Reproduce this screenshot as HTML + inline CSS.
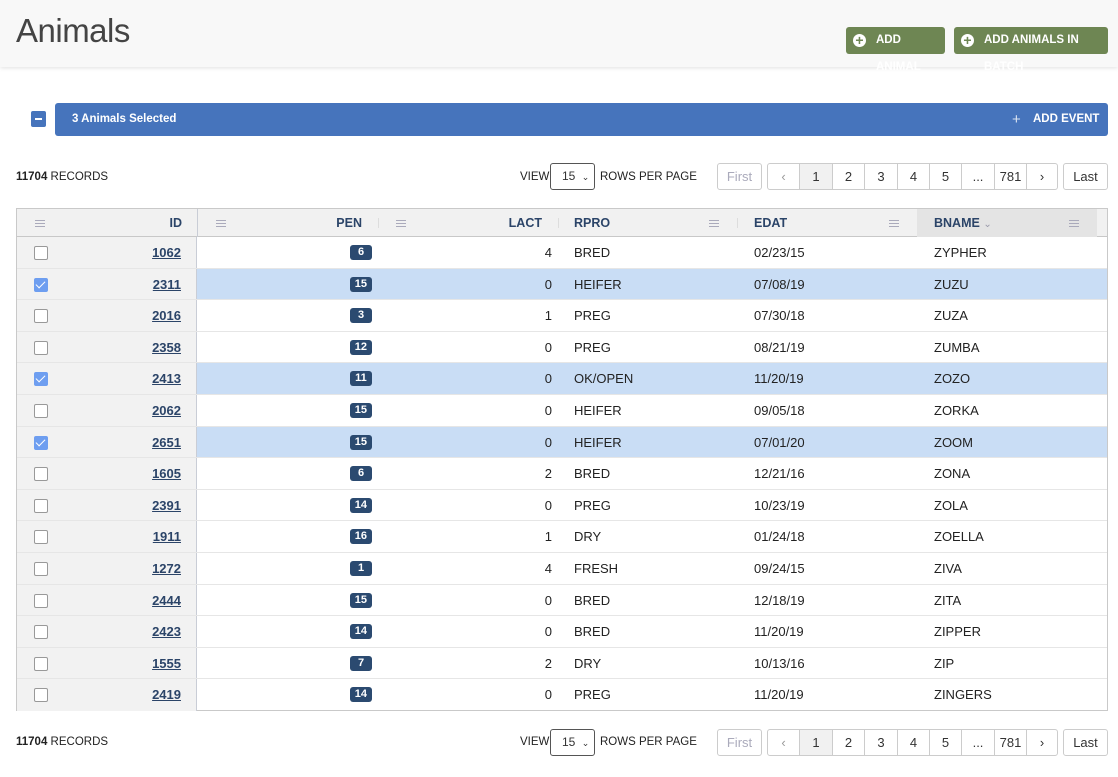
<!DOCTYPE html>
<html><head><meta charset="utf-8"><style>
*{box-sizing:border-box;margin:0;padding:0}
body{width:1118px;height:777px;background:#fff;font-family:"Liberation Sans Narrow","Liberation Sans",sans-serif;color:#222;position:relative;overflow:hidden;font-size:13px}
.abs{position:absolute}
.hdr{left:0;top:0;width:1118px;height:67px;background:#f8f8f8;box-shadow:0 1px 4px rgba(0,0,0,.12)}
h1{position:absolute;left:16px;top:12px;font-size:33px;font-weight:normal;color:#444;font-family:"Liberation Sans",sans-serif;letter-spacing:-0.5px}
.gbtn{position:absolute;top:27px;height:27px;background:#6e8653;border-radius:3px;color:#fff;font-weight:bold;font-size:11.5px;line-height:27px;padding-left:30px}
.gbtn:before{content:"+";position:absolute;left:7px;top:7px;width:13px;height:13px;border-radius:50%;background:#fff;color:#6e8653;font-size:14px;line-height:13px;text-align:center}
.bar{left:55px;top:103px;width:1053px;height:33px;background:#4674bc;border-radius:3px;color:#fff;font-weight:bold;font-size:11.5px;line-height:33px}
.minus{left:31px;top:111px;width:15px;height:16px;background:#4674bc;border-radius:2px}
.minus:after{content:"";position:absolute;left:4px;top:7px;width:7px;height:1.5px;background:#fff}
.rec{font-size:11.5px}
.pg{position:absolute;height:27px;border:1px solid #ccc;border-radius:3px;background:#fff;font-size:13px;line-height:25px;text-align:center;color:#333}
.cell{position:absolute;top:0;height:25px;line-height:25px;border-left:1px solid #ccc;text-align:center}
.tbl{left:16px;top:208px;width:1092px;height:503px;border:1px solid #c9c9c9}
.th{position:absolute;left:0;top:0;width:1090px;height:28px;background:#f1f1f1;border-bottom:1px solid #c8c8c8;font-weight:bold;color:#2b4468;font-size:12.5px;line-height:28px}
.ham{position:absolute;top:11px;width:10px;height:7px;border-top:1px solid #aab;border-bottom:1px solid #aab}
.ham:after{content:"";position:absolute;left:0;top:2px;width:10px;border-top:1px solid #aab}
.sep{position:absolute;top:9px;width:1px;height:10px;background:#ddd}
.row{position:absolute;left:0;width:1090px;height:31.6px;border-bottom:1px solid #e6e6e6;font-size:13px;line-height:31px}
.row.sel{background:#c9ddf5}
.c0{position:absolute;left:0;top:0;width:180px;height:100%;background:#f2f2f2;border-right:1px solid #c9cdd6}
.cb{position:absolute;left:17px;top:9px;width:14px;height:14px;border:1.5px solid #999;border-radius:2px;background:#fff}
.sel .cb{background:#6e9ef0;border-color:#6e9ef0}
.sel .cb:after{content:"";position:absolute;left:3px;top:0px;width:4px;height:8px;border:solid #fff;border-width:0 1.5px 1.5px 0;transform:rotate(45deg)}
.id{position:absolute;right:15px;top:0;font-weight:bold;text-decoration:underline;color:#2b4468}
.badge{position:absolute;right:735px;top:8px;height:15px;min-width:22px;padding:0 5px;background:#2b4a70;color:#fff;border-radius:3px;font-size:11px;font-weight:bold;line-height:15px;text-align:center}
.lact{position:absolute;right:555px;top:0}
.rp{position:absolute;left:557px;top:0}
.ed{position:absolute;left:737px;top:0}
.bn{position:absolute;left:917px;top:0}
</style></head><body>
<div class="abs hdr"></div>
<h1>Animals</h1>
<div class="gbtn" style="left:846px;width:99px">ADD ANIMAL</div>
<div class="gbtn" style="left:954px;width:154px">ADD ANIMALS IN BATCH</div>
<div class="abs minus"></div>
<div class="abs bar"><span style="position:absolute;left:17px">3 Animals Selected</span><span style="position:absolute;left:957px;font-weight:normal;font-size:15px;opacity:.8">+</span><span style="position:absolute;left:978px">ADD EVENT</span></div>

<div class="abs rec" style="left:16px;top:171px"><b>11704</b> RECORDS</div>
<div class="abs rec" style="left:520px;top:171px">VIEW</div>
<div class="pg" style="left:550px;top:163px;width:45px;border-color:#555;font-size:12px;text-align:left;padding-left:11px">15 <span style="font-size:9px;margin-left:3px">&#8964;</span></div>
<div class="abs rec" style="left:600px;top:171px">ROWS PER PAGE</div>
<div class="pg" style="left:717px;top:163px;width:45px;color:#aab">First</div>
<div class="pg" style="left:767px;top:163px;width:291px">
<div class="cell" style="left:0;width:31px;border:0;color:#999">&#8249;</div>
<div class="cell" style="left:31px;width:33px;background:#f1f1f1">1</div>
<div class="cell" style="left:64px;width:32px">2</div>
<div class="cell" style="left:96px;width:33px">3</div>
<div class="cell" style="left:129px;width:32px">4</div>
<div class="cell" style="left:161px;width:32px">5</div>
<div class="cell" style="left:193px;width:33px">...</div>
<div class="cell" style="left:226px;width:32px">781</div>
<div class="cell" style="left:258px;width:31px">&#8250;</div>
</div>
<div class="pg" style="left:1063px;top:163px;width:45px">Last</div>

<div class="abs tbl">
<div class="th">
<div class="ham" style="left:18px"></div><span style="position:absolute;right:925px">ID</span>
<div style="position:absolute;left:180px;top:0;width:1px;height:28px;background:#c9cdd6"></div>
<div class="ham" style="left:199px"></div><span style="position:absolute;right:745px">PEN</span><div class="sep" style="left:361px"></div>
<div class="ham" style="left:379px"></div><span style="position:absolute;right:565px">LACT</span><div class="sep" style="left:541px"></div>
<span style="position:absolute;left:557px">RPRO</span><div class="ham" style="left:692px"></div><div class="sep" style="left:720px"></div>
<span style="position:absolute;left:737px">EDAT</span><div class="ham" style="left:872px"></div><div class="sep" style="left:900px"></div>
<div style="position:absolute;left:900px;top:0;width:180px;height:28px;background:#e4e4e4"></div>
<span style="position:absolute;left:917px">BNAME <span style="color:#99a;font-weight:normal;font-size:10px">&#8964;</span></span><div class="ham" style="left:1052px"></div>
</div>
<div id="rows"></div>
<div class="row" style="top:28px"><div class="c0"><div class="cb"></div><span class="id">1062</span></div><span class="badge">6</span><span class="lact">4</span><span class="rp">BRED</span><span class="ed">02/23/15</span><span class="bn">ZYPHER</span></div>
<div class="row sel" style="top:59.6px"><div class="c0"><div class="cb"></div><span class="id">2311</span></div><span class="badge">15</span><span class="lact">0</span><span class="rp">HEIFER</span><span class="ed">07/08/19</span><span class="bn">ZUZU</span></div>
<div class="row" style="top:91.2px"><div class="c0"><div class="cb"></div><span class="id">2016</span></div><span class="badge">3</span><span class="lact">1</span><span class="rp">PREG</span><span class="ed">07/30/18</span><span class="bn">ZUZA</span></div>
<div class="row" style="top:122.8px"><div class="c0"><div class="cb"></div><span class="id">2358</span></div><span class="badge">12</span><span class="lact">0</span><span class="rp">PREG</span><span class="ed">08/21/19</span><span class="bn">ZUMBA</span></div>
<div class="row sel" style="top:154.4px"><div class="c0"><div class="cb"></div><span class="id">2413</span></div><span class="badge">11</span><span class="lact">0</span><span class="rp">OK/OPEN</span><span class="ed">11/20/19</span><span class="bn">ZOZO</span></div>
<div class="row" style="top:186px"><div class="c0"><div class="cb"></div><span class="id">2062</span></div><span class="badge">15</span><span class="lact">0</span><span class="rp">HEIFER</span><span class="ed">09/05/18</span><span class="bn">ZORKA</span></div>
<div class="row sel" style="top:217.6px"><div class="c0"><div class="cb"></div><span class="id">2651</span></div><span class="badge">15</span><span class="lact">0</span><span class="rp">HEIFER</span><span class="ed">07/01/20</span><span class="bn">ZOOM</span></div>
<div class="row" style="top:249.2px"><div class="c0"><div class="cb"></div><span class="id">1605</span></div><span class="badge">6</span><span class="lact">2</span><span class="rp">BRED</span><span class="ed">12/21/16</span><span class="bn">ZONA</span></div>
<div class="row" style="top:280.8px"><div class="c0"><div class="cb"></div><span class="id">2391</span></div><span class="badge">14</span><span class="lact">0</span><span class="rp">PREG</span><span class="ed">10/23/19</span><span class="bn">ZOLA</span></div>
<div class="row" style="top:312.4px"><div class="c0"><div class="cb"></div><span class="id">1911</span></div><span class="badge">16</span><span class="lact">1</span><span class="rp">DRY</span><span class="ed">01/24/18</span><span class="bn">ZOELLA</span></div>
<div class="row" style="top:344px"><div class="c0"><div class="cb"></div><span class="id">1272</span></div><span class="badge">1</span><span class="lact">4</span><span class="rp">FRESH</span><span class="ed">09/24/15</span><span class="bn">ZIVA</span></div>
<div class="row" style="top:375.6px"><div class="c0"><div class="cb"></div><span class="id">2444</span></div><span class="badge">15</span><span class="lact">0</span><span class="rp">BRED</span><span class="ed">12/18/19</span><span class="bn">ZITA</span></div>
<div class="row" style="top:407.2px"><div class="c0"><div class="cb"></div><span class="id">2423</span></div><span class="badge">14</span><span class="lact">0</span><span class="rp">BRED</span><span class="ed">11/20/19</span><span class="bn">ZIPPER</span></div>
<div class="row" style="top:438.8px"><div class="c0"><div class="cb"></div><span class="id">1555</span></div><span class="badge">7</span><span class="lact">2</span><span class="rp">DRY</span><span class="ed">10/13/16</span><span class="bn">ZIP</span></div>
<div class="row" style="top:470.4px;border-bottom:0"><div class="c0"><div class="cb"></div><span class="id">2419</span></div><span class="badge">14</span><span class="lact">0</span><span class="rp">PREG</span><span class="ed">11/20/19</span><span class="bn">ZINGERS</span></div>
</div>

<div class="abs rec" style="left:16px;top:736px"><b>11704</b> RECORDS</div>
<div class="abs rec" style="left:520px;top:736px">VIEW</div>
<div class="pg" style="left:550px;top:729px;width:45px;border-color:#555;font-size:12px;text-align:left;padding-left:11px">15 <span style="font-size:9px;margin-left:3px">&#8964;</span></div>
<div class="abs rec" style="left:600px;top:736px">ROWS PER PAGE</div>
<div class="pg" style="left:717px;top:729px;width:45px;color:#aab">First</div>
<div class="pg" style="left:767px;top:729px;width:291px">
<div class="cell" style="left:0;width:31px;border:0;color:#999">&#8249;</div>
<div class="cell" style="left:31px;width:33px;background:#f1f1f1">1</div>
<div class="cell" style="left:64px;width:32px">2</div>
<div class="cell" style="left:96px;width:33px">3</div>
<div class="cell" style="left:129px;width:32px">4</div>
<div class="cell" style="left:161px;width:32px">5</div>
<div class="cell" style="left:193px;width:33px">...</div>
<div class="cell" style="left:226px;width:32px">781</div>
<div class="cell" style="left:258px;width:31px">&#8250;</div>
</div>
<div class="pg" style="left:1063px;top:729px;width:45px">Last</div>
</body></html>
